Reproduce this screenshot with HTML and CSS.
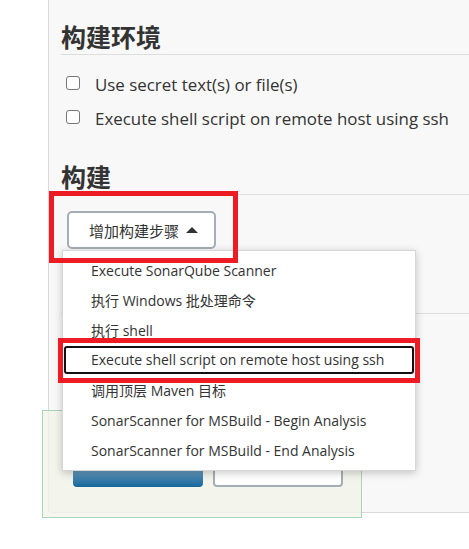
FILE: index.html
```html
<!DOCTYPE html>
<html lang="zh-CN">
<head>
<meta charset="utf-8">
<link rel="stylesheet" href="styles.css">
</head>
<body>
<div class="page">
  <div class="gutter"></div>
  <div class="panel">
    <section class="section">
      <h2 class="heading">构建环境</h2>
      <label class="check"><span class="box"></span><span>Use secret text(s) or file(s)</span></label>
      <label class="check"><span class="box"></span><span>Execute shell script on remote host using ssh</span></label>
    </section>
    <section class="section build">
      <h2 class="heading">构建</h2>
      <div class="add-wrap">
        <button class="add-btn">增加构建步骤<span class="caret"></span></button>
      </div>
    </section>
    <div class="divider"></div>
  </div>
</div>

<div class="bottom-bar">
  <button class="save">保存</button>
  <button class="apply">应用</button>
</div>

<ul class="menu">
  <li>Execute SonarQube Scanner</li>
  <li>执行 Windows 批处理命令</li>
  <li>执行 shell</li>
  <li class="focused">Execute shell script on remote host using ssh</li>
  <li>调用顶层 Maven 目标</li>
  <li>SonarScanner for MSBuild - Begin Analysis</li>
  <li>SonarScanner for MSBuild - End Analysis</li>
</ul>

<div class="mark mark-btn"></div>
<div class="mark mark-item"></div>
</body>
</html>
```
FILE: styles.css
```css
* { box-sizing: border-box; }
html, body {
  margin: 0;
  padding: 0;
  background: #fff;
  font-family: "Open Sans", "Noto Sans CJK SC", sans-serif;
  color: #333;
}
.page {
  display: flex;
  width: 469px;
  height: 513px;
}
.gutter { width: 48px; flex: none; }
.panel {
  flex: 1;
  background: #f8f8f8;
  border-left: 1px solid #d9d9d9;
  border-bottom: 1px solid #d9d9d9;
  border-bottom-left-radius: 4px;
  padding: 21px 0 0 12px;
}
.heading {
  margin: 0;
  font-family: "Noto Sans CJK SC", sans-serif;
  font-size: 25px;
  line-height: 30px;
  font-weight: 700;
  color: #333;
  padding-bottom: 3px;
  border-bottom: 1px solid #dedede;
}
.check {
  display: flex;
  align-items: center;
  height: 34px;
  font-size: 16.9px;
  padding-left: 5px;
}
.section > .heading + .check { margin-top: 12px; }
.box {
  width: 14px;
  height: 14px;
  border: 1px solid #767676;
  border-radius: 3px;
  background: #fff;
  margin-right: 15px;
  margin-top: -3px;
  flex: none;
}
.build { margin-top: 26px; }
.add-wrap { padding: 16px 0 0 6px; }
.add-btn {
  width: 149px;
  height: 38px;
  border: 2px solid #a5adb6;
  border-radius: 5px;
  background: #fff;
  font-family: "Noto Sans CJK SC", sans-serif;
  font-size: 15px;
  color: #333;
  display: flex;
  align-items: center;
  justify-content: center;
  gap: 7px;
  padding: 0 0 0 4px;
}
.caret {
  width: 0; height: 0;
  border-left: 6px solid transparent;
  border-right: 6px solid transparent;
  border-bottom: 6px solid #333;
}
.divider {
  margin-top: 64px;
  height: 1px;
  background: #dedede;
}
.bottom-bar {
  position: absolute;
  left: 42px;
  top: 410px;
  width: 320px;
  height: 108px;
  border: 1px solid #a9d5bb;
  background: rgba(241, 244, 232, 0.75);
  display: flex;
  gap: 10px;
  padding: 29px 0 0 30px;
}
.bottom-bar button {
  width: 130px;
  height: 47px;
  border-radius: 4px;
  font-family: "Noto Sans CJK SC", sans-serif;
  font-size: 15px;
  padding: 0 0 8px;
}
.save {
  border: none;
  color: #fff;
  font-weight: 700;
  background: linear-gradient(to bottom, #e2ebf1 0%, #a9c4d7 45%, #5f93b8 68%, #13679c 100%);
}
.apply {
  border: 2px solid #a5adb6;
  background: #fff;
  color: #333;
}
.menu {
  position: absolute;
  left: 62px;
  top: 250px;
  width: 354px;
  margin: 0;
  padding: 5px 0 4px;
  list-style: none;
  background: #fff;
  border: 1px solid #d6d6d6;
  box-shadow: 0 2px 8px rgba(0,0,0,0.22);
  font-size: 14px;
  color: #333;
}
.menu li {
  height: 30px;
  line-height: 30px;
  padding-left: 28px;
  white-space: nowrap;
}
.menu li.focused {
  margin: 0 1px 2px;
  border: 2px solid #111;
  border-radius: 3px;
  line-height: 24px;
  height: 28px;
  padding-left: 25px;
}
.mark {
  position: absolute;
  border: 5px solid #ed1c24;
}
.mark-btn { left: 49px; top: 191px; width: 189px; height: 72px; }
.mark-item { left: 58px; top: 338px; width: 362px; height: 45px; }
```
